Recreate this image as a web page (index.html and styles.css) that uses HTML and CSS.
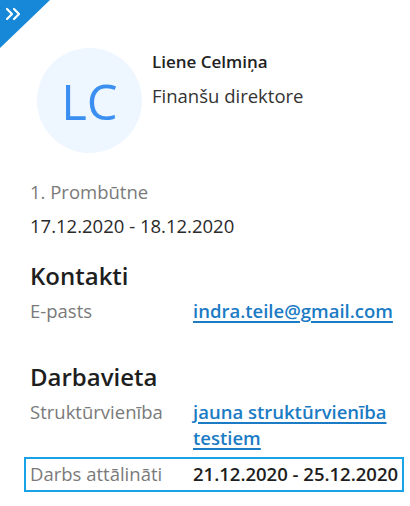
FILE: index.html
```html
<!DOCTYPE html>
<html lang="lv">
<head>
<meta charset="utf-8">
<title>Liene Celmiņa</title>
<link rel="stylesheet" href="styles.css">
</head>
<body>
<div class="card">
  <div class="corner">
    <svg class="corner-icon" width="16" height="14" viewBox="0 0 16 14" fill="none" stroke="#fff" stroke-width="2.2" stroke-linecap="round" stroke-linejoin="round">
      <polyline points="2,2 7,7 2,12"/>
      <polyline points="9,2 14,7 9,12"/>
    </svg>
  </div>

  <div class="profile">
    <div class="avatar">LC</div>
    <div class="person">
      <div class="name">Liene Celmiņa</div>
      <div class="role">Finanšu direktore</div>
    </div>
  </div>

  <div class="absence">
    <div class="absence-label">1. Prombūtne</div>
    <div class="absence-dates">17.12.2020 - 18.12.2020</div>
  </div>

  <h2 class="section-title">Kontakti</h2>
  <div class="row">
    <div class="label">E-pasts</div>
    <div class="value"><a class="link" href="#">indra.teile@gmail.com</a></div>
  </div>

  <h2 class="section-title section-gap">Darbavieta</h2>
  <div class="row">
    <div class="label">Struktūrvienība</div>
    <div class="value"><a class="link" href="#">jauna struktūrvienība testiem</a></div>
  </div>
  <div class="row row-highlight">
    <div class="label">Darbs attālināti</div>
    <div class="value value-strong">21.12.2020 - 25.12.2020</div>
  </div>
</div>
</body>
</html>
```

FILE: styles.css
```css
* { box-sizing: border-box; }

html, body {
  margin: 0;
  padding: 0;
  background: #ffffff;
}

body {
  font-family: "Open Sans", "Noto Sans", sans-serif;
  color: #333333;
  font-size: 18.5px;
  line-height: 26px;
}

.card {
  position: relative;
  width: 410px;
  min-height: 506px;
  padding: 48px 6px 0 30px;
}

.corner {
  position: absolute;
  top: 0;
  left: 0;
  width: 50px;
  height: 48px;
  background: #1787d8;
  clip-path: polygon(0 0, 100% 0, 0 100%);
}

.corner-icon {
  position: absolute;
  left: 5px;
  top: 7px;
}

.profile {
  display: flex;
  align-items: flex-start;
  padding-left: 7px;
}

.avatar {
  width: 105px;
  height: 105px;
  border-radius: 50%;
  background: #eef6ff;
  color: #3a8ff0;
  font-size: 49px;
  font-weight: 400;
  display: flex;
  align-items: center;
  justify-content: center;
  flex: none;
}

.person {
  margin-left: 10px;
  padding-top: 2px;
}

.name {
  font-size: 17px;
  font-weight: 600;
  line-height: 24px;
  color: #222222;
}

.role {
  margin-top: 9px;
  color: #333333;
}

.absence {
  margin-top: 26px;
}

.absence-label {
  color: #7a7a7a;
}

.absence-dates {
  margin-top: 8px;
  color: #2a2a2a;
}

.section-title {
  margin: 21px 0 0;
  font-size: 24px;
  line-height: 32px;
  font-weight: 600;
  color: #1e1e1e;
}

.section-gap {
  margin-top: 37px;
}

.row {
  display: grid;
  grid-template-columns: 163px 1fr;
  margin-top: 6px;
}

.label {
  color: #7a7a7a;
}

.link {
  color: #1b7bc4;
  font-weight: 600;
  text-decoration: underline;
  text-decoration-thickness: 1.5px;
  text-underline-offset: 3px;
}

.row-highlight {
  margin: 6px 0 0 -6px;
  padding: 2px 2px 3px 4px;
  border: 2px solid #19a3e6;
}

.value-strong {
  font-weight: 600;
  color: #1e1e1e;
}
```
